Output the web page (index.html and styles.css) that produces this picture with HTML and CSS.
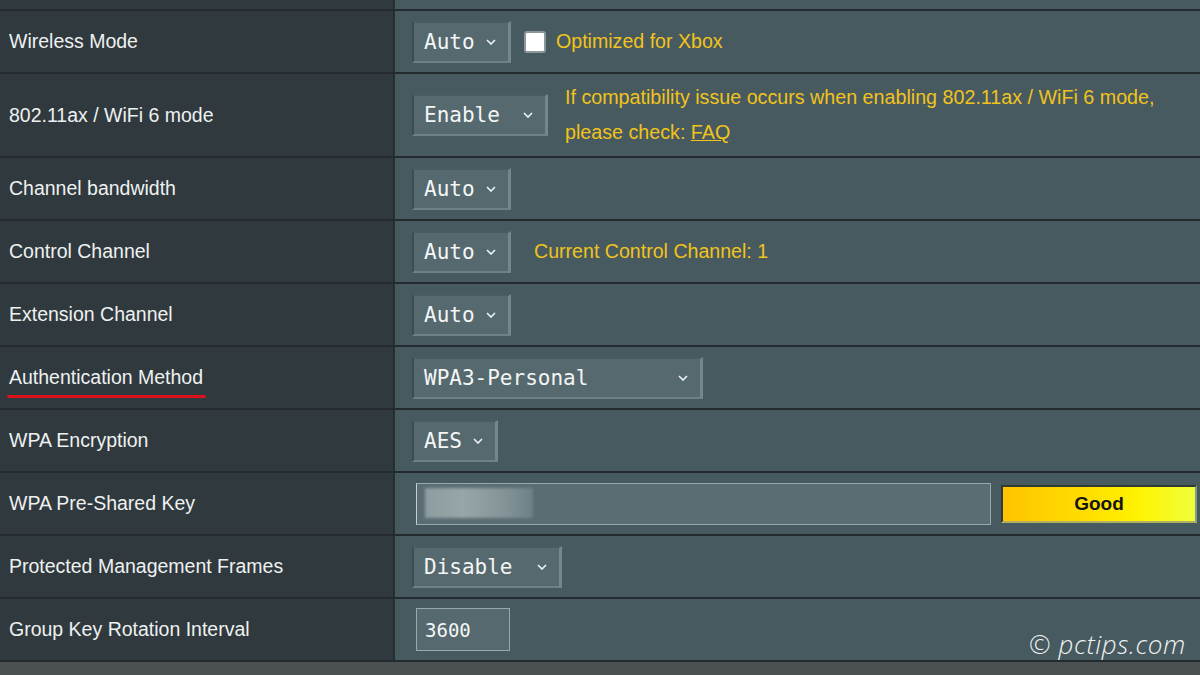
FILE: index.html
```html
<!DOCTYPE html>
<html lang="en">
<head>
    <meta charset="UTF-8">
    <meta name="viewport" content="width=device-width, initial-scale=1.0">
    <title>Wireless - Professional</title>
    <link rel="stylesheet" href="styles.css">
</head>
<body>

    <div class="settings">
        <div class="row stub"><div class="label"></div><div class="value"></div></div>

        <div class="row">
            <div class="label">Wireless Mode</div>
            <div class="value">
                <div class="select" style="width: 99px">Auto<svg class="caret" viewBox="0 0 10 6"><polyline points="1,1 5,5 9,1"/></svg></div>
                <span class="checkbox"></span>
                <span class="hint">Optimized for Xbox</span>
            </div>
        </div>

        <div class="row tall">
            <div class="label">802.11ax / WiFi 6 mode</div>
            <div class="value">
                <div class="select" style="width: 136px">Enable<svg class="caret" viewBox="0 0 10 6"><polyline points="1,1 5,5 9,1"/></svg></div>
                <p class="hint note">If compatibility issue occurs when enabling 802.11ax / WiFi 6 mode,<br>please check: <a href="#">FAQ</a></p>
            </div>
        </div>

        <div class="row">
            <div class="label">Channel bandwidth</div>
            <div class="value">
                <div class="select" style="width: 99px">Auto<svg class="caret" viewBox="0 0 10 6"><polyline points="1,1 5,5 9,1"/></svg></div>
            </div>
        </div>

        <div class="row">
            <div class="label">Control Channel</div>
            <div class="value">
                <div class="select" style="width: 99px">Auto<svg class="caret" viewBox="0 0 10 6"><polyline points="1,1 5,5 9,1"/></svg></div>
                <span class="hint channel">Current Control Channel: 1</span>
            </div>
        </div>

        <div class="row">
            <div class="label">Extension Channel</div>
            <div class="value">
                <div class="select" style="width: 99px">Auto<svg class="caret" viewBox="0 0 10 6"><polyline points="1,1 5,5 9,1"/></svg></div>
            </div>
        </div>

        <div class="row">
            <div class="label"><span class="marked">Authentication Method</span></div>
            <div class="value">
                <div class="select" style="width: 291px">WPA3-Personal<svg class="caret" viewBox="0 0 10 6"><polyline points="1,1 5,5 9,1"/></svg></div>
            </div>
        </div>

        <div class="row">
            <div class="label">WPA Encryption</div>
            <div class="value">
                <div class="select" style="width: 86px">AES<svg class="caret" viewBox="0 0 10 6"><polyline points="1,1 5,5 9,1"/></svg></div>
            </div>
        </div>

        <div class="row">
            <div class="label">WPA Pre-Shared Key</div>
            <div class="value">
                <div class="textbox key">
                    <span class="masked"></span>
                </div>
                <div class="strength">Good</div>
            </div>
        </div>

        <div class="row">
            <div class="label">Protected Management Frames</div>
            <div class="value">
                <div class="select" style="width: 150px">Disable<svg class="caret" viewBox="0 0 10 6"><polyline points="1,1 5,5 9,1"/></svg></div>
            </div>
        </div>

        <div class="row">
            <div class="label">Group Key Rotation Interval</div>
            <div class="value">
                <div class="textbox interval">3600</div>
            </div>
        </div>
    </div>

    <div class="watermark">© pctips.com</div>

</body>
</html>
```

FILE: styles.css
```css
body {
    margin: 0;
    background-color: #4b5152;
    font-family: Arial, "Liberation Sans", sans-serif;
    height: 675px;
    overflow: hidden;
    position: relative;
}
.settings {
    width: 1200px;
}
.row {
    display: grid;
    grid-template-columns: 395px 1fr;
    height: 63px;
    box-sizing: border-box;
    border-bottom: 2px solid #232b2e;
}
.row.stub {
    height: 11px;
}
.row.tall {
    height: 84px;
}
.label {
    display: flex;
    align-items: center;
    padding-left: 9px;
    background-color: #30393d;
    border-right: 2px solid #262e31;
    color: #eef1f1;
    font-size: 19.5px;
}
.marked {
    position: relative;
}
.marked::after {
    content: "";
    position: absolute;
    left: -2px;
    right: -3px;
    bottom: -9px;
    height: 3px;
    border-radius: 2px;
    background-color: #d9121b;
}
.value {
    display: flex;
    align-items: center;
    padding-left: 17px;
    background-color: #475a5f;
}
.select {
    display: flex;
    align-items: center;
    justify-content: space-between;
    box-sizing: border-box;
    height: 42px;
    padding: 0 12px 0 10px;
    background-color: #55696e;
    border-top: 2px solid #4a5c61;
    border-left: 2px solid #3d4c50;
    border-right: 3px solid #76878b;
    border-bottom: 2px solid #6f8185;
    color: #f4f6f6;
    font-family: "DejaVu Sans Mono", "Liberation Mono", monospace;
    font-size: 21px;
}
.caret {
    width: 10px;
    height: 6px;
    fill: none;
    stroke: #f0f3f3;
    stroke-width: 1.6;
}
.checkbox {
    width: 18px;
    height: 18px;
    margin-left: 13px;
    background-color: #fff;
    border: 2px solid #8d9799;
    border-radius: 3px;
}
.hint {
    color: #f2c31c;
    font-size: 19.6px;
    margin-left: 10px;
}
.hint.note {
    margin: 0 0 0 17px;
    line-height: 35px;
    font-size: 19.7px;
}
.hint.channel {
    margin-left: 23px;
}
.hint a {
    color: #f2c31c;
}
.textbox {
    box-sizing: border-box;
    height: 43px;
    margin-left: 4px;
    background-color: #56696e;
    border: 1px solid #98a8ac;
    color: #f4f6f6;
    font-family: "DejaVu Sans Mono", "Liberation Mono", monospace;
    font-size: 19px;
}
.textbox.key {
    width: 575px;
    height: 42px;
    background-color: #5a6d72;
    border-left-color: #c4cfd1;
    position: relative;
}
.masked {
    position: absolute;
    left: 8px;
    top: 4px;
    width: 108px;
    height: 30px;
    background: linear-gradient(90deg, #8c9c9f 0%, #97a6a9 35%, #8a9a9d 60%, #7f9094 80%, #6e8084 100%);
    filter: blur(1.5px);
}
.textbox.interval {
    width: 94px;
    display: flex;
    align-items: center;
    padding-left: 8px;
}
.strength {
    width: 196px;
    height: 38px;
    box-sizing: border-box;
    margin-left: 10px;
    display: flex;
    align-items: center;
    justify-content: center;
    border: 2px solid #2e3a32;
    border-right-color: #8a9a7a;
    border-bottom-color: #b0b060;
    background: linear-gradient(90deg, #ffc400 0%, #ffdc00 40%, #fff200 70%, #eeff3a 100%);
    color: #151515;
    font-weight: bold;
    font-size: 19px;
}
.watermark {
    position: absolute;
    left: 1029px;
    top: 626px;
    color: #f1f3f3;
    font-family: "Open Sans", sans-serif;
    font-style: italic;
    font-weight: 300;
    font-size: 26px;
    letter-spacing: 0.6px;
}
```
